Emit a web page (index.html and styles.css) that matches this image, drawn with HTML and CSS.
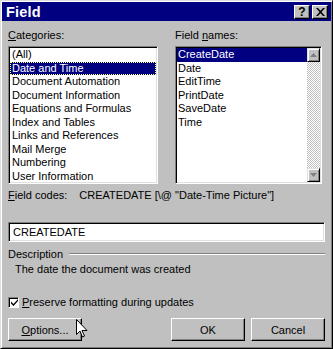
FILE: index.html
```html
<!DOCTYPE html>
<html>
<head>
<meta charset="utf-8">
<link rel="stylesheet" href="styles.css">
</head>
<body>
<div class="window">
  <div class="titlebar">
    <span class="title">Field</span>
    <div class="tb-buttons">
      <span class="tb-btn">?</span>
      <span class="tb-btn"><svg width="9" height="8" viewBox="0 0 9 8"><path d="M0 0h2l2.5 2.7L7 0h2L5.5 4 9 8H7L4.5 5.3 2 8H0l3.5-4z" fill="#000"/></svg></span>
    </div>
  </div>
  <div class="body">
    <div class="lists">
      <div class="col">
        <div class="label"><u>C</u>ategories:</div>
        <div class="listbox">
          <div class="item">(All)</div>
          <div class="item sel focus">Date and Time</div>
          <div class="item">Document Automation</div>
          <div class="item">Document Information</div>
          <div class="item">Equations and Formulas</div>
          <div class="item">Index and Tables</div>
          <div class="item">Links and References</div>
          <div class="item">Mail Merge</div>
          <div class="item">Numbering</div>
          <div class="item">User Information</div>
        </div>
      </div>
      <div class="col">
        <div class="label">Field <u>n</u>ames:</div>
        <div class="listbox scrolled">
          <div class="items">
            <div class="item sel">CreateDate</div>
            <div class="item">Date</div>
            <div class="item">EditTime</div>
            <div class="item">PrintDate</div>
            <div class="item">SaveDate</div>
            <div class="item">Time</div>
          </div>
          <div class="scrollbar">
            <div class="sb-btn"><svg width="7" height="4" viewBox="0 0 7 4"><path d="M3.5 0L7 4H0z" fill="#808080"/></svg></div>
            <div class="track"></div>
            <div class="sb-btn"><svg width="7" height="4" viewBox="0 0 7 4"><path d="M0 0h7L3.5 4z" fill="#808080"/></svg></div>
          </div>
        </div>
      </div>
    </div>
    <div class="codes"><span><u>F</u>ield codes:</span><span class="code">CREATEDATE [\@ "Date-Time Picture"]</span></div>
    <div class="input">CREATEDATE</div>
    <div class="desc-head"><span>Description</span><span class="rule"></span></div>
    <div class="desc">The date the document was created</div>
    <div class="check">
      <span class="box"><svg width="7" height="7" viewBox="0 0 7 7"><path d="M0 2.5l2.5 2.5L7 0v2L2.5 7 0 4.5z" fill="#000"/></svg></span>
      <span><u>P</u>reserve formatting during updates</span>
    </div>
    <div class="buttons">
      <div class="btn"><u>O</u>ptions...</div>
      <div class="btn-group">
        <div class="btn">OK</div>
        <div class="btn">Cancel</div>
      </div>
    </div>
  </div>
  <svg class="cursor" width="12" height="19" viewBox="0 0 12 19"><path d="M0.5 0.5v15l3.5-3.5 2.5 6 2-1-2.5-5.5h5z" fill="#fff" stroke="#000" stroke-width="1"/></svg>
</div>
</body>
</html>
```
FILE: styles.css
```css
html, body {
  margin: 0;
  padding: 0;
  background: #c0c0c0;
}
.window {
  position: relative;
  width: 333px;
  height: 349px;
  box-sizing: border-box;
  background: #c0c0c0;
  border: 1px solid;
  border-color: #dfdfdf #000 #000 #dfdfdf;
  box-shadow: inset 1px 1px #fff, inset -1px -1px #808080;
  padding: 1px;
  font-family: "Liberation Sans", Arial, sans-serif;
  font-size: 11px;
  color: #000;
  overflow: hidden;
}
.titlebar {
  height: 19px;
  background: #000080;
  display: flex;
  align-items: center;
  justify-content: space-between;
  padding: 0 3px 0 4px;
}
.title {
  color: #fff;
  font-weight: bold;
  font-size: 14.5px;
  letter-spacing: 0.2px;
}
.tb-buttons {
  display: flex;
  gap: 2px;
}
.tb-btn {
  width: 16px;
  height: 14px;
  box-sizing: border-box;
  background: #c0c0c0;
  border: 1px solid;
  border-color: #fff #000 #000 #fff;
  box-shadow: inset -1px -1px #808080;
  display: flex;
  align-items: center;
  justify-content: center;
  font-weight: bold;
  font-size: 12px;
  line-height: 1;
}
.body {
  padding: 7px 5px 0 6px;
}
.lists {
  display: grid;
  grid-template-columns: 150px 147px;
  column-gap: 17px;
}
.label {
  height: 14px;
  line-height: 14px;
  margin-bottom: 4px;
}
.listbox {
  height: 138px;
  box-sizing: border-box;
  background: #fff;
  border: 1px solid;
  border-color: #808080 #fff #fff #808080;
  box-shadow: inset 1px 1px #000, inset -1px -1px #dfdfdf;
  padding: 1px;
  overflow: hidden;
}
.listbox.scrolled {
  display: flex;
}
.items {
  flex: 1;
}
.item {
  height: 13.5px;
  line-height: 13.5px;
  padding-left: 2px;
  white-space: nowrap;
}
.scrolled .item {
  padding-left: 1px;
}
.item.sel {
  background: #000080;
  color: #fff;
}
.item.focus {
  outline: 1px dotted #ffff80;
  outline-offset: -1px;
}
.scrollbar {
  width: 13px;
  display: flex;
  flex-direction: column;
}
.sb-btn {
  height: 14px;
  box-sizing: border-box;
  background: #c0c0c0;
  border: 1px solid;
  border-color: #dfdfdf #000 #000 #dfdfdf;
  box-shadow: inset 1px 1px #fff, inset -1px -1px #808080;
  display: flex;
  align-items: center;
  justify-content: center;
}
.track {
  flex: 1;
  background-color: #e0e0e0;
  background-image: repeating-conic-gradient(#c0c0c0 0 25%, #fff 0 50%);
  background-size: 2px 2px;
}
.codes {
  margin-top: 4px;
  height: 14px;
  line-height: 14px;
  display: flex;
}
.code {
  margin-left: 12px;
}
.input {
  margin-top: 20px;
  width: 317px;
  height: 20px;
  box-sizing: border-box;
  background: #fff;
  border: 1px solid;
  border-color: #808080 #fff #fff #808080;
  box-shadow: inset 1px 1px #000, inset -1px -1px #dfdfdf;
  padding-left: 4px;
  line-height: 18px;
}
.desc-head {
  margin-top: 5px;
  height: 14px;
  line-height: 14px;
  display: flex;
  align-items: center;
  width: 317px;
}
.rule {
  flex: 1;
  margin-left: 6px;
  height: 0;
  border-top: 1px solid #808080;
  border-bottom: 1px solid #fff;
}
.desc {
  margin-top: 1px;
  height: 14px;
  line-height: 14px;
  padding-left: 7px;
}
.check {
  margin-top: 19px;
  height: 14px;
  display: flex;
  align-items: center;
  gap: 3px;
}
.box {
  width: 11px;
  height: 11px;
  box-sizing: border-box;
  background: #fff;
  border: 1px solid;
  border-color: #808080 #fff #fff #808080;
  box-shadow: inset 1px 1px #000;
  display: flex;
  align-items: center;
  justify-content: center;
  padding: 1px 0 0 1px;
}
.buttons {
  margin-top: 9px;
  width: 317px;
  display: flex;
  justify-content: space-between;
}
.btn-group {
  display: flex;
  gap: 6px;
}
.btn {
  width: 74px;
  height: 23px;
  box-sizing: border-box;
  background: #c0c0c0;
  border: 1px solid;
  border-color: #fff #000 #000 #fff;
  box-shadow: inset -1px -1px #808080;
  display: flex;
  align-items: center;
  justify-content: center;
}
.cursor {
  position: absolute;
  left: 75px;
  top: 318px;
}
```
